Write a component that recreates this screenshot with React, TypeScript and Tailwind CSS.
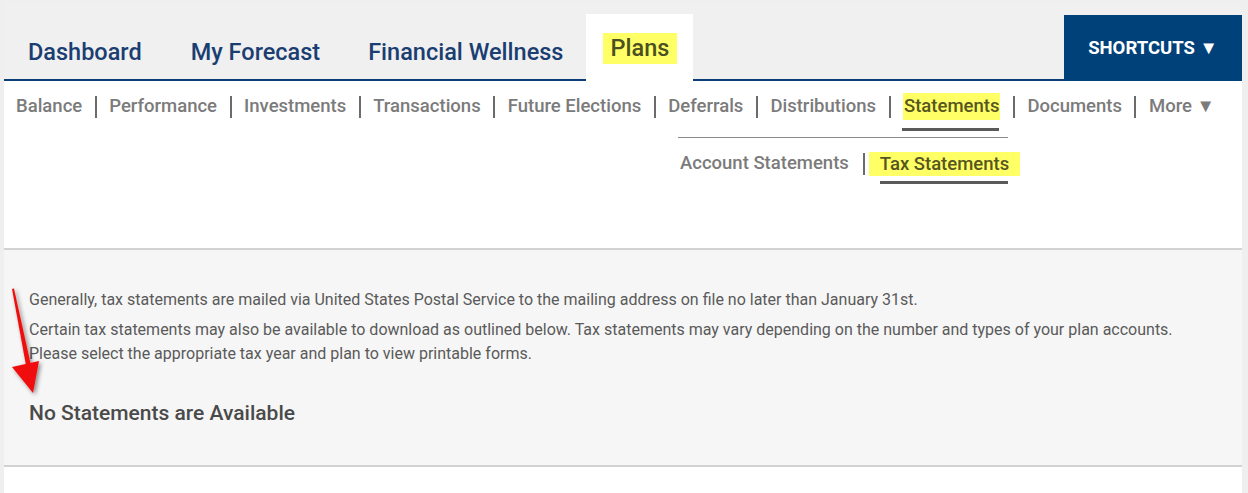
import React from "react";

const subItems = [
  "Balance",
  "Performance",
  "Investments",
  "Transactions",
  "Future Elections",
  "Deferrals",
  "Distributions",
  "Statements",
  "Documents",
];

function Sep() {
  return <span className="mx-[12.5px] inline-block h-[22px] w-[2px] bg-[#6b6b6b]" />;
}

export default function App() {
  return (
    <div
      className="relative w-[1248px] h-[493px] overflow-hidden bg-[#efefef] pl-[4px] pr-[6px] pt-[2px]"
      style={{ fontFamily: "Roboto, 'Liberation Sans', sans-serif" }}
    >
      {/* top nav */}
      <div className="flex h-[79px] items-end border-b-2 border-[#0d3e78] bg-[#f0f0f0]">
        <div className="flex items-end text-[23.5px] font-medium text-[#1b3e72]">
          <span className="ml-[24px] mb-[9px]">Dashboard</span>
          <span className="ml-[49px] mb-[9px]">My Forecast</span>
          <span className="ml-[48px] mb-[9px]">Financial Wellness</span>
          <div className="relative -mb-[2px] ml-[23px] flex h-[67px] w-[107px] items-start justify-center bg-white pt-[19px]">
            <span className="bg-[#ffff66] px-[8px] leading-[31px] text-[#4b4f22]">Plans</span>
          </div>
        </div>
        <div className="ml-auto -mb-[2px] flex h-[66px] w-[178px] items-center justify-center bg-[#00417a] pt-[2px] text-[18.5px] font-bold text-white">
          SHORTCUTS ▼
        </div>
      </div>

      {/* sub nav */}
      <div className="h-[167px] bg-white">
        <div className="flex items-center whitespace-nowrap pl-[12px] pt-[12px] text-[18.5px] font-medium text-[#7b7b7b]">
          {subItems.map((s, i) => (
            <React.Fragment key={s}>
              {i > 0 && <Sep />}
              {s === "Statements" ? (
                <span className="relative">
                  <span className="block bg-[#ffff66] px-[1px] leading-[27px] text-[#56561f]">{s}</span>
                  <span className="absolute left-[-1px] top-[35px] h-[3px] w-[97px] bg-[#5a5a5a]" />
                </span>
              ) : (
                <span className="leading-[27px]">{s}</span>
              )}
            </React.Fragment>
          ))}
          <Sep />
          <span className="leading-[27px]">More ▼</span>
        </div>
        <div className="ml-[674px] mt-[17px] w-[330px] border-t border-[#8a8a8a] pt-[12px]">
          <div className="flex items-center whitespace-nowrap text-[18.5px] font-medium text-[#7b7b7b]">
            <span className="ml-[2px] shrink-0">Account Statements</span>
            <span className="ml-[14px] mr-[4px] inline-block h-[22px] w-[2px] shrink-0 bg-[#6b6b6b]" />
            <span className="relative shrink-0">
              <span className="block bg-[#ffff66] px-[11px] leading-[24px] text-[#56561f]">Tax Statements</span>
              <span className="absolute left-[11px] top-[29px] h-[3px] w-[128px] bg-[#5a5a5a]" />
            </span>
          </div>
        </div>
      </div>

      {/* content */}
      <div className="h-[219px] border-y-2 border-[#d2d2d2] bg-[#f6f6f6] pl-[25px] pt-[40px] text-[16px] text-[#5a5a5a]">
        <p className="leading-[20px]">
          Generally, tax statements are mailed via United States Postal Service to the mailing address on file no later than January 31st.
        </p>
        <p className="mt-[8px] leading-[24px]">
          Certain tax statements may also be available to download as outlined below. Tax statements may vary depending on the number and types of your plan accounts.
          <br />
          Please select the appropriate tax year and plan to view printable forms.
        </p>
        <p className="mt-[32px] text-[21px] font-medium text-[#4a4a4a]">No Statements are Available</p>
      </div>
      <div className="h-[30px] bg-white" />

      {/* red annotation arrow */}
      <svg className="absolute left-0 top-[280px]" width="60" height="125" viewBox="0 0 60 125">
        <defs>
          <filter id="sh" x="-50%" y="-50%" width="200%" height="200%">
            <feDropShadow dx="2" dy="2" stdDeviation="2" floodColor="#000" floodOpacity="0.45" />
          </filter>
        </defs>
        <g filter="url(#sh)">
          <path d="M12 9 L14 8.5 L32 90 L27 91 Z" fill="#f01010" />
          <path d="M12 87 L39 81 L33 113 Z" fill="#f01010" />
        </g>
      </svg>
    </div>
  );
}
